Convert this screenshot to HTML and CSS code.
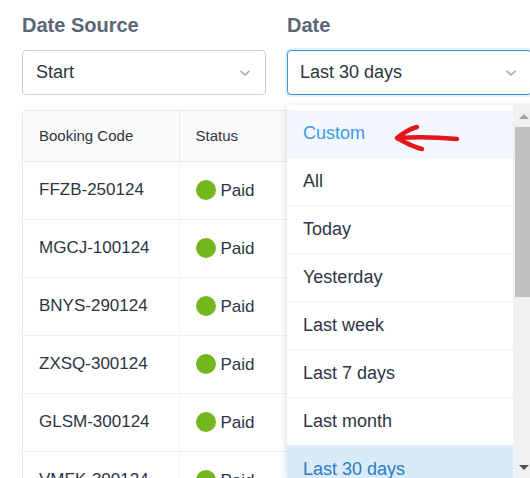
FILE: index.html
```html
<!DOCTYPE html>
<html>
<head>
<meta charset="utf-8">
<link rel="stylesheet" href="styles.css">
</head>
<body>
<div class="page">
  <div class="filters">
    <div class="field">
      <div class="label">Date Source</div>
      <div class="select"><span>Start</span><svg class="chev" width="12" height="8" viewBox="0 0 12 8"><path d="M1.5 1.8 L6 6 L10.5 1.8" fill="none" stroke="#a3aab4" stroke-width="1.6"/></svg></div>
    </div>
    <div class="field field-date">
      <div class="label">Date</div>
      <div class="select is-focused"><span>Last 30 days</span><svg class="chev" width="12" height="8" viewBox="0 0 12 8"><path d="M1.5 1.8 L6 6 L10.5 1.8" fill="none" stroke="#a3aab4" stroke-width="1.6"/></svg></div>
      <div class="dropdown">
        <ul class="options">
          <li class="opt opt-hover">Custom</li>
          <li class="opt">All</li>
          <li class="opt">Today</li>
          <li class="opt">Yesterday</li>
          <li class="opt">Last week</li>
          <li class="opt">Last 7 days</li>
          <li class="opt">Last month</li>
          <li class="opt opt-selected">Last 30 days</li>
        </ul>
        <div class="scrollbar">
          <div class="sb-btn"><span class="tri-up"></span></div>
          <div class="sb-thumb"></div>
          <div class="sb-track"></div>
          <div class="sb-btn"><span class="tri-down"></span></div>
        </div>
      </div>
      <svg class="annot" width="80" height="40" viewBox="0 0 80 40"><path d="M7 18 C25 17 45 17 67 19 M7 18 C13 13 20 9 27 7 M7 18 C14 22 23 27 32 29" fill="none" stroke="#e4161c" stroke-width="4.5" stroke-linecap="round" stroke-linejoin="round"/></svg>
    </div>
  </div>
  <div class="table-wrap">
    <table class="table">
      <thead>
        <tr><th class="c1">Booking Code</th><th class="c2">Status</th><th>Amount</th></tr>
      </thead>
      <tbody>
        <tr><td>FFZB-250124</td><td><span class="dot"></span>Paid</td><td></td></tr>
        <tr><td>MGCJ-100124</td><td><span class="dot"></span>Paid</td><td></td></tr>
        <tr><td>BNYS-290124</td><td><span class="dot"></span>Paid</td><td></td></tr>
        <tr><td>ZXSQ-300124</td><td><span class="dot"></span>Paid</td><td></td></tr>
        <tr><td>GLSM-300124</td><td><span class="dot"></span>Paid</td><td></td></tr>
        <tr><td>VMFK-300124</td><td><span class="dot"></span>Paid</td><td></td></tr>
      </tbody>
    </table>
  </div>
</div>
</body>
</html>
```

FILE: styles.css
```css
* { box-sizing: border-box; }
html, body { margin: 0; padding: 0; }
body {
  width: 530px;
  height: 478px;
  overflow: hidden;
  background: #fff;
  font-family: "Liberation Sans", Arial, sans-serif;
  color: #2d3542;
}
.page {
  padding: 12px 0 0 22px;
  width: 620px;
}
.filters {
  display: grid;
  grid-template-columns: 244px 245px;
  column-gap: 21px;
}
.field { position: relative; }
.label {
  font-size: 20px;
  font-weight: bold;
  line-height: 26px;
  color: #5b6676;
  margin-bottom: 12px;
}
.select {
  height: 45px;
  border: 1px solid #c9ced6;
  border-radius: 4px;
  display: flex;
  align-items: center;
  justify-content: space-between;
  padding: 0 14px 0 13px;
  font-size: 18px;
  color: #2d3542;
  background: #fff;
}
.select.is-focused {
  border-color: #3b97df;
  box-shadow: 0 0 0 2px rgba(59,151,223,0.15);
  padding-left: 12px;
}
.chev { display: block; }
.dropdown {
  position: absolute;
  left: 0;
  top: 93px;
  width: 246px;
  height: 373px;
  background: #fff;
  box-shadow: 0 2px 8px rgba(0,0,0,0.16);
  display: flex;
  overflow: hidden;
  z-index: 5;
}
.options {
  list-style: none;
  margin: 0;
  padding: 5px 0 0 0;
  flex: 1;
}
.opt {
  height: 48px;
  display: flex;
  align-items: center;
  padding-left: 16px;
  font-size: 18px;
  color: #2d3542;
  border-bottom: 1px solid #f4f4f4;
}
.opt-hover { background: #f2f8fd; color: #3d99e2; }
.opt-selected { background: #d9eaf8; color: #2f7cc5; }
.scrollbar {
  width: 20px;
  background: #f1f1f1;
  display: flex;
  flex-direction: column;
  padding-left: 2px;
}
.sb-btn {
  height: 22px;
  display: flex;
  align-items: center;
  justify-content: center;
}
.sb-thumb { height: 170px; background: #c1c1c1; }
.sb-track { flex: 1; }
.tri-up {
  width: 0; height: 0;
  border-left: 5px solid transparent;
  border-right: 5px solid transparent;
  border-bottom: 5px solid #a3a3a3;
}
.tri-down {
  width: 0; height: 0;
  border-left: 5px solid transparent;
  border-right: 5px solid transparent;
  border-top: 5px solid #505050;
}
.annot {
  position: absolute;
  left: 103px;
  top: 108px;
  z-index: 6;
}
.table-wrap {
  margin-top: 15px;
  width: 560px;
  border: 1px solid #e8e8e8;
  border-radius: 4px;
  overflow: hidden;
}
.table {
  width: 100%;
  border-collapse: collapse;
}
.table th {
  height: 50px;
  background: #fafafa;
  font-size: 15px;
  font-weight: normal;
  text-align: left;
  padding: 0 16px;
  color: #2d3542;
  border-bottom: 1px solid #e8e8e8;
  border-right: 1px solid #ececec;
}
.table th.c1 { width: 156px; }
.table th.c2 { width: 120px; }
.table td {
  height: 58px;
  font-size: 17px;
  padding: 0 16px;
  border-bottom: 1px solid #efefef;
  border-right: 1px solid #f2f2f2;
  color: #2d3542;
  white-space: nowrap;
}
.dot {
  display: inline-block;
  width: 20px;
  height: 20px;
  border-radius: 50%;
  background: #74b61e;
  vertical-align: -4px;
  margin-right: 5px;
}
```
